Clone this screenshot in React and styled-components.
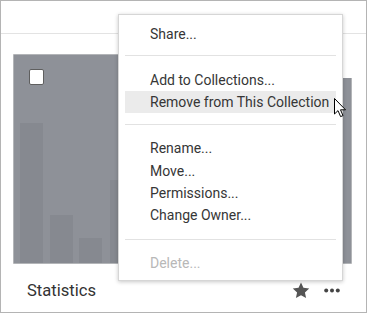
import React from "react";
import styled, { createGlobalStyle } from "styled-components";

const Global = createGlobalStyle`
  html, body { margin: 0; padding: 0; background: #fff; }
  body { font-family: Roboto, "Liberation Sans", sans-serif; }
  * { box-sizing: border-box; }
`;

const Frame = styled.div`
  position: relative;
  width: 367px;
  height: 313px;
  border: 1px solid #b4b4b4;
  background: #fff;
  display: flex;
  flex-direction: column;
  overflow: hidden;
`;

const Header = styled.div`
  height: 33px;
  flex: none;
  border-bottom: 1px solid #e3e3e3;
`;

const Card = styled.div`
  position: relative;
  margin: 20px 0 0 12px;
  width: 339px;
  display: flex;
  flex-direction: column;
`;

const Thumb = styled.div`
  position: relative;
  width: 339px;
  height: 210px;
  line-height: 0;
`;

const Check = styled.div`
  position: absolute;
  left: 16px;
  top: 15px;
  width: 15px;
  height: 16px;
  background: #fff;
  border: 1px solid #5f5f5f;
  border-radius: 2px;
`;

const Footer = styled.div`
  display: flex;
  align-items: center;
  height: 48px;
  padding: 0 0 0 14px;
`;

const Title = styled.div`
  flex: 1;
  font-size: 16.6px;
  color: #333;
  padding-top: 5px;
`;

const Actions = styled.div`
  display: flex;
  align-items: center;
  gap: 14px;
  padding: 5px 12px 0 0;
  color: #555;
`;

const Menu = styled.div`
  position: absolute;
  left: 117px;
  top: 13px;
  width: 225px;
  height: 267px;
  background: #fff;
  border: 1px solid #d6d6d6;
  box-shadow: 0 1px 4px rgba(0, 0, 0, 0.22);
  padding: 8px 6px 6px;
  display: flex;
  flex-direction: column;
`;

const Item = styled.div`
  height: 22.5px;
  display: flex;
  align-items: center;
  padding-left: 25px;
  font-size: 14px;
  color: ${(p) => (p.$disabled ? "#b8b8b8" : "#363636")};
  background: ${(p) => (p.$active ? "#ebebeb" : "transparent")};
  white-space: nowrap;
`;

const Sep = styled.div`
  height: 1px;
  background: #e2e2e2;
  margin: ${(p) => p.$top}px 0 12px;
  flex: none;
`;

const Cursor = styled.svg`
  position: absolute;
  left: 333px;
  top: 97px;
`;

const bars = [
  [7, 69], [37, 161], [66, 184], [97, 126], [127, 90], [157, 140], [187, 110],
  [217, 150], [247, 120], [277, 100], [307, 148],
];

function Thumbnail() {
  return (
    <svg width="339" height="210" viewBox="0 0 339 210">
      <rect x="0" y="0" width="339" height="210" fill="#d9d9d9" />
      <rect x="0.5" y="0.5" width="338" height="209" fill="#8e9198" />
      {bars.map(([x, y], i) => (
        <rect key={i} x={x} y={y} width="23" height={209 - y} fill="#868990" />
      ))}
      <rect x="329" y="0" width="10" height="24" fill="#fff" />
    </svg>
  );
}

function Star() {
  return (
    <svg width="18" height="17" viewBox="0 0 24 23">
      <path
        d="M12 0.8l3.3 7.1 7.8.9-5.8 5.3 1.6 7.7L12 17.9l-6.9 3.9 1.6-7.7L.9 8.8l7.8-.9z"
        fill="#555"
      />
    </svg>
  );
}

function Dots() {
  return (
    <svg width="16" height="5" viewBox="0 0 16 5">
      <circle cx="2.2" cy="2.5" r="2" fill="#444" />
      <circle cx="8" cy="2.5" r="2" fill="#444" />
      <circle cx="13.8" cy="2.5" r="2" fill="#444" />
    </svg>
  );
}

export default function App() {
  return (
    <Frame>
      <Global />
      <Header />
      <Card>
        <Thumb>
          <Thumbnail />
          <Check />
        </Thumb>
        <Footer>
          <Title>Statistics</Title>
          <Actions>
            <Star />
            <Dots />
          </Actions>
        </Footer>
      </Card>
      <Menu>
        <Item>Share...</Item>
        <Sep $top={10} />
        <Item>Add to Collections...</Item>
        <Item $active>Remove from This Collection</Item>
        <Sep $top={11} />
        <Item>Rename...</Item>
        <Item>Move...</Item>
        <Item>Permissions...</Item>
        <Item>Change Owner...</Item>
        <Sep $top={12} />
        <Item $disabled>Delete...</Item>
      </Menu>
      <Cursor width="13" height="20" viewBox="0 0 13 20">
        <path
          d="M0.5 0.5 L0.5 16 L4 12.6 L6.6 18.6 L9 17.6 L6.5 11.8 L11.5 11.8 Z"
          fill="#fff"
          stroke="#000"
          strokeWidth="1"
          strokeLinejoin="miter"
        />
      </Cursor>
    </Frame>
  );
}
